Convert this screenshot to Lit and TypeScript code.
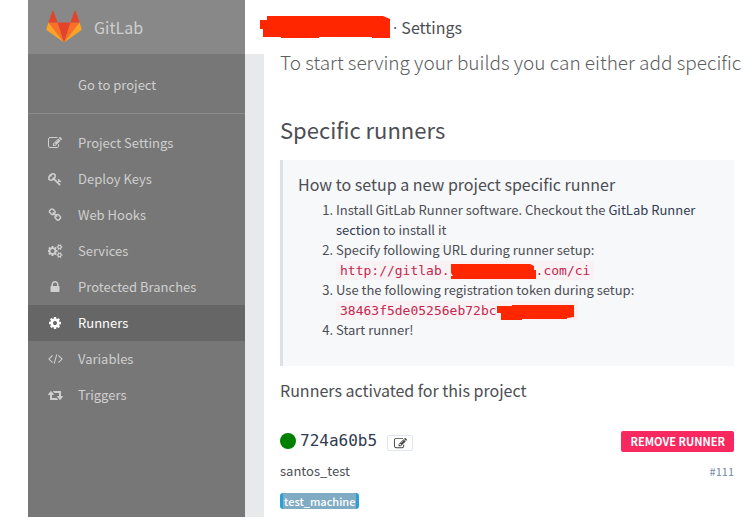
import { LitElement, html, svg, css } from "lit";
import { customElement, property } from "lit/decorators.js";

const gear = "q0 16-149 31-12 27-30 52 51 113 51 138 0 4-4 7-122 71-124 71-8 0-46-47t-52-68q-20 2-30 2t-30-2q-14 21-52 68t-46 47q-2 0-124-71-4-3-4-7 0-25 51-138-18-25-30-52-149-15-149-31v-140q0-16 149-31 13-29 30-52-51-113-51-138 0-4 4-7 4-2 35-20t59-34 30-16q8 0 46 46.5t52 67.5q20-2 30-2t30 2q51-71 92-112l6-2q4 0 124 70 4 3 4 7 0 25-51 138 17 23 30 52 149 15 149 31z";

const icons: Record<string, { box: string; art: unknown }> = {
  edit: {
    box: "0 0 1792 1792",
    art: svg`<path d="M888 1184l116-116-152-152-116 116v56h96v96h56zm440-720q-16-16-33 1l-350 350q-17 17-1 33t33-1l350-350q17-17 1-33zm80 594v190q0 119-84.5 203.5t-203.5 84.5h-832q-119 0-203.5-84.5t-84.5-203.5v-832q0-119 84.5-203.5t203.5-84.5h832q63 0 117 25 15 7 18 23 3 17-9 29l-49 49q-14 14-32 8-23-6-45-6h-832q-66 0-113 47t-47 113v832q0 66 47 113t113 47h832q66 0 113-47t47-113v-126q0-13 9-22l64-64q15-15 35-7t20 29zm-96-738l288 288-672 672h-288v-288zm444 132l-92 92-288-288 92-92q28-28 68-28t68 28l152 152q28 28 28 68t-28 68z"/>`,
  },
  key: {
    box: "0 0 1792 1792",
    art: svg`<path d="M832 512q0-80-56-136t-136-56-136 56-56 136q0 42 19 83-41-19-83-19-80 0-136 56t-56 136 56 136 136 56 136-56 56-136q0-42-19-83 41 19 83 19 80 0 136-56t56-136zm851 704q0 17-49 66t-66 49q-9 0-28.5-16t-36.5-33-38.5-40-24.5-26l-96 96 220 220q28 28 28 68 0 42-39 81t-81 39q-40 0-68-28l-671-671q-176 131-365 131-163 0-265.5-102.5t-102.5-265.5q0-160 95-313t248-248 313-95q163 0 265.5 102.5t102.5 265.5q0 189-131 365l355 355 96-96q-3-3-26-24.5t-40-38.5-33-36.5-16-28.5q0-17 49-66t66-49q13 0 23 10 6 6 46 44.5t82 79.5 86.5 86 73 78 28.5 41z"/>`,
  },
  link: {
    box: "0 0 1792 1792",
    art: svg`<path d="M1520 1216q0-40-28-68l-208-208q-28-28-68-28-42 0-72 32 3 3 19 18.5t21.5 21.5 15 19 13 25.5 3.5 27.5q0 40-28 68t-68 28q-15 0-27.5-3.5t-25.5-13-19-15-21.5-21.5-18.5-19q-33 31-33 73 0 40 28 68l206 207q27 27 68 27 40 0 68-26l147-146q28-28 28-67zm-703-705q0-40-28-68l-206-207q-28-28-68-28-39 0-68 27l-147 146q-28 28-28 67 0 40 28 68l208 208q27 27 68 27 42 0 72-31-3-3-19-18.5t-21.5-21.5-15-19-13-25.5-3.5-27.5q0-40 28-68t68-28q15 0 27.5 3.5t25.5 13 19 15 21.5 21.5 18.5 19q33-31 33-73zm895 705q0 120-85 203l-147 146q-83 83-203 83-121 0-204-85l-206-207q-83-83-83-203 0-123 88-209l-88-88q-86 88-208 88-120 0-204-84l-208-208q-84-84-84-204t85-203l147-146q83-83 203-83 121 0 204 85l206 207q83 83 83 203 0 123-88 209l88 88q86-88 208-88 120 0 204 84l208 208q84 84 84 204z"/>`,
  },
  cogs: {
    box: "0 0 1920 1792",
    art: svg`<path d="M832 896q0-106-75-181t-181-75-181 75-75 181 75 181 181 75 181-75 75-181zm768 512q0-52-38-90t-90-38-90 38-38 90q0 53 37.5 90.5t90.5 37.5 90.5-37.5 37.5-90.5zm0-1024q0-52-38-90t-90-38-90 38-38 90q0 53 37.5 90.5t90.5 37.5 90.5-37.5 37.5-90.5zm-384 421v185q0 10-7 19.5t-16 10.5l-155 24q-11 35-32 76 34 48 90 115 7 11 7 20 0 12-7 19-23 30-82.5 89.5t-78.5 59.5q-11 0-21-7l-115-90q-37 19-77 31-11 108-23 155-7 24-30 24h-186q-11 0-20-7.5t-10-17.5l-23-153q-34-10-75-31l-118 89q-7 7-20 7-11 0-21-8-144-133-144-160 0-9 7-19 10-14 41-53t47-61q-23-44-35-82l-152-24q-10-1-17-9.5t-7-19.5v-185q0-10 7-19.5t16-10.5l155-24q11-35 32-76-34-48-90-115-7-11-7-20 0-12 7-20 22-30 82-89t79-59q11 0 21 7l115 90q34-18 77-32 11-108 23-154 7-24 30-24h186q11 0 20 7.5t10 17.5l23 153q34 10 75 31l118-89q8-7 20-7 11 0 21 8 144 133 144 160 0 8-7 19-12 16-42 54t-45 60q23 48 34 82l152 23q10 2 17 10.5t7 19.5zm640 533v140${gear}m0-1024v140${gear}"/>`,
  },
  lock: {
    box: "0 0 1792 1792",
    art: svg`<path d="M640 768h512v-192q0-106-75-181t-181-75-181 75-75 181v192zm832 96v576q0 40-28 68t-68 28h-960q-40 0-68-28t-28-68v-576q0-40 28-68t68-28h32v-192q0-184 132-316t316-132 316 132 132 316v192h32q40 0 68 28t28 68z"/>`,
  },
  cog: {
    box: "0 0 1792 1792",
    art: svg`<path d="M1152 896q0-106-75-181t-181-75-181 75-75 181 75 181 181 75 181-75 75-181zm512-109v222q0 12-8 23t-20 13l-185 28q-19 54-39 91 35 50 107 138 10 12 10 25t-9 23q-27 37-99 108t-94 71q-12 0-26-9l-138-108q-44 23-91 38-16 136-29 186-7 28-36 28h-222q-14 0-24.5-8.5t-11.5-21.5l-28-184q-49-16-90-37l-141 107q-10 9-25 9-14 0-25-11-126-114-165-168-7-10-7-23 0-12 8-23 15-21 51-66.5t54-70.5q-27-50-41-99l-183-27q-13-2-21-12.5t-8-23.5v-222q0-12 8-23t19-13l186-28q14-46 39-92-40-57-107-138-10-12-10-24 0-10 9-23 26-36 98.5-107.5t94.5-71.5q13 0 26 10l138 107q44-23 91-38 16-136 29-186 7-28 36-28h222q14 0 24.5 8.5t11.5 21.5l28 184q49 16 90 37l142-107q9-9 24-9 13 0 25 10 129 119 165 170 7 8 7 22 0 12-8 23-15 21-51 66.5t-54 70.5q26 50 41 98l183 28q13 2 21 12.5t8 23.5z"/>`,
  },
  code: {
    box: "0 0 1920 1792",
    art: svg`<path d="M580 440L120 900l460 460M1340 440l460 460-460 460M1130 300L790 1500" fill="none" stroke="currentColor" stroke-width="130"/>`,
  },
  retweet: {
    box: "0 0 1920 1792",
    art: svg`<path d="M1280 1504q0 13-9.5 22.5t-22.5 9.5h-960q-8 0-13.5-2t-9-7-5.5-8-3-11.5-1-11.5v-600h-192q-26 0-45-19t-19-45q0-24 15-41l320-384q19-22 49-22t49 22l320 384q15 17 15 41 0 26-19 45t-45 19h-192v384h576q16 0 25 11l160 192q7 10 7 21zm640-416q0 24-15 41l-320 384q-20 23-49 23t-49-23l-320-384q-15-17-15-41 0-26 19-45t45-19h192v-384h-576q-16 0-25-12l-160-192q-7-9-7-20 0-13 9.5-22.5t22.5-9.5h960q8 0 13.5 2t9 7 5.5 8 3 11.5 1 11.5v600h192q26 0 45 19t19 45z"/>`,
  },
};

@customElement("ui-icon")
export class UiIcon extends LitElement {
  @property() name = "edit";

  static styles = css`
    :host {
      display: inline-flex;
      justify-content: center;
      width: 16px;
      height: 14px;
    }
    svg {
      height: 100%;
      fill: currentColor;
    }
  `;

  render() {
    const icon = icons[this.name];
    return html`<svg viewBox=${icon.box} aria-hidden="true">${icon.art}</svg>`;
  }
}

const links = [
  { icon: "edit", label: "Project Settings" },
  { icon: "key", label: "Deploy Keys" },
  { icon: "link", label: "Web Hooks" },
  { icon: "cogs", label: "Services" },
  { icon: "lock", label: "Protected Branches" },
  { icon: "cog", label: "Runners", active: true },
  { icon: "code", label: "Variables" },
  { icon: "retweet", label: "Triggers" },
];

@customElement("side-nav")
export class SideNav extends LitElement {
  static styles = css`
    :host {
      display: block;
      flex: none;
      width: 217px;
      background: #777;
      color: #cfcfcf;
      font-size: 13px;
    }
    a {
      color: inherit;
      text-decoration: none;
    }
    .brand {
      display: flex;
      align-items: center;
      gap: 12px;
      height: 54px;
      padding-left: 18px;
      box-sizing: border-box;
      background: #888;
      font-size: 16px;
    }
    .brand svg {
      width: 36px;
      height: 34px;
    }
    .back {
      display: block;
      padding: 21px 0 18px 50px;
      line-height: 20px;
      border-bottom: 1px solid #8c8c8c;
    }
    ul {
      list-style: none;
      margin: 0;
      padding: 11px 0;
    }
    .item {
      display: flex;
      align-items: center;
      gap: 15px;
      height: 36px;
      padding-left: 19px;
    }
    .active {
      background: #666;
      color: #fff;
    }
  `;

  render() {
    return html`
      <a class="brand" href="#">
        <svg viewBox="0 0 36 34" aria-hidden="true">
          <path fill="#e24329" d="M18 32.500L24.500 12.500H11.500z" />
          <path fill="#fc6d26" d="M18 32.500L11.500 12.500H2.400zM18 32.500L24.500 12.500H33.600z" />
          <path fill="#fca326" d="M2.400 12.500L0.500 18.500Q0.200 19.800 1.200 20.500L18 32.500zM33.600 12.500L35.500 18.500Q35.800 19.800 34.800 20.500L18 32.500z" />
          <path fill="#e24329" d="M2.400 12.500H11.500L7.500 1Q7 0 6.500 1zM33.600 12.500H24.500L28.500 1Q29 0 29.500 1z" />
        </svg>
        <span>GitLab</span>
      </a>
      <a class="back" href="#">Go to project</a>
      <ul>
        ${links.map(
          (l) => html`<li>
            <a class=${l.active ? "item active" : "item"} href="#"><ui-icon name=${l.icon}></ui-icon>${l.label}</a>
          </li>`
        )}
      </ul>
    `;
  }
}

@customElement("app-root")
export class AppRoot extends LitElement {
  static styles = css`
    :host {
      display: flex;
      min-height: 100vh;
      padding: 0 7px 9px 28px;
      box-sizing: border-box;
      background: #fff;
      color: #4c4e54;
      font-family: "Noto Sans CJK SC", "Open Sans", sans-serif;
      font-size: 13px;
      line-height: 20px;
    }
    a {
      color: #313b52;
      text-decoration: none;
    }
    h1, h2, h3, h4, p, ol {
      margin: 0;
      font-weight: 400;
    }
    .page {
      flex: 1;
      min-width: 0;
      display: flex;
      flex-direction: column;
    }
    .top {
      display: flex;
      align-items: center;
      gap: 2px;
      height: 54px;
      padding-left: 14px;
    }
    h1 {
      font-size: 16px;
    }
    .sep {
      font-family: "Open Sans", sans-serif;
    }
    .mark-title {
      width: 132px;
      height: 24px;
    }
    .mark {
      fill: #ff2600;
    }
    .body {
      flex: 1;
      padding: 0 15px 0 16px;
      border-left: 19px solid #e8e9eb;
    }
    .lead {
      white-space: nowrap;
      font-size: 19px;
      font-weight: 300;
      line-height: 16px;
      color: #5c5d5e;
    }
    h2 {
      margin: 44px 0 16px;
      font-size: 22px;
      line-height: 30px;
    }
    .help {
      padding: 12px 15px 26px;
      border-left: 3px solid #dfdfe7;
      background: #f7f8fa;
    }
    h3, h4 {
      font-size: 16px;
      line-height: 24px;
    }
    h3 {
      margin-bottom: 4px;
    }
    ol {
      padding-left: 38px;
    }
    code {
      font-family: "DejaVu Sans Mono", monospace;
      font-size: 13px;
      line-height: 16px;
      padding: 2px 4px;
      border-radius: 2px;
      background: #f9f2f4;
      color: #c7254e;
      white-space: nowrap;
    }
    code svg {
      height: 16px;
      margin: -2px 0;
      vertical-align: middle;
    }
    .mark-host {
      width: 86px;
    }
    .mark-token {
      width: 77px;
    }
    h4 {
      margin: 12px 0 27px;
    }
    .row {
      display: flex;
      align-items: center;
      justify-content: space-between;
    }
    .id {
      display: flex;
      align-items: center;
      gap: 4px;
      height: 24px;
      font-family: "DejaVu Sans Mono", monospace;
      font-size: 16px;
    }
    .dot {
      width: 16px;
      height: 16px;
      border-radius: 50%;
      background: #008000;
    }
    .edit {
      display: flex;
      align-items: center;
      justify-content: center;
      width: 26px;
      height: 16px;
      margin: 4px 0 0 6px;
      padding: 0;
      border: 1px solid #e2e6ee;
      border-radius: 2px;
      background: #fff;
      color: #444;
    }
    .edit ui-icon {
      height: 13px;
    }
    .remove {
      height: 21px;
      padding: 0 9px;
      border: 0;
      border-radius: 2px;
      background: #f9285f;
      color: #fff;
      font: 700 11px/20px "Noto Sans CJK SC", sans-serif;
    }
    .meta {
      margin: 8px 0 10px;
    }
    .num {
      font-size: 11px;
      color: #7488a8;
    }
    .tag {
      display: inline-block;
      border: solid #2d9fd8;
      border-width: 0 3px;
      padding: 0 1px;
      border-radius: 3px;
      background: #7fabc4;
      color: #fff;
      font-size: 11px;
      font-weight: 500;
      line-height: 16px;
    }
  `;

  render() {
    return html`
      <side-nav></side-nav>
      <div class="page">
        <header class="top">
          <svg class="mark mark-title" viewBox="0 0 132 24" aria-hidden="true">
            <path d="M8 1H124L131 4V23H113V22H60V23H22V22H4V14H1V5H8z" />
          </svg>
          <h1><span class="sep">· </span>Settings</h1>
        </header>
        <main class="body">
          <p class="lead">To start serving your builds you can either add specific</p>
          <h2>Specific runners</h2>
          <section class="help">
            <h3>How to setup a new project specific runner</h3>
            <ol>
              <li>Install GitLab Runner software. Checkout the <a href="#">GitLab Runner section</a> to install it</li>
              <li>Specify following URL during runner setup:<br />
                <code>http://gitlab.<svg class="mark mark-host" viewBox="0 0 86 16" aria-hidden="true"><path d="M1 0H80L84 2V6H86V15H1V12H3L1 9z" /></svg>.com/ci</code>
              </li>
              <li>Use the following registration token during setup:<br />
                <code>38463f5de05256eb72bc<svg class="mark mark-token" viewBox="0 0 77 16" aria-hidden="true"><path d="M0 2H15V1H77V13L70 14V15H25V16H4V9H0z" /></svg></code>
              </li>
              <li>Start runner!</li>
            </ol>
          </section>
          <h4>Runners activated for this project</h4>
          <div class="row">
            <div class="id">
              <span class="dot"></span>
              <a href="#">724a60b5</a>
              <button class="edit" aria-label="Edit runner"><ui-icon name="edit"></ui-icon></button>
            </div>
            <button class="remove">REMOVE RUNNER</button>
          </div>
          <div class="row meta">
            <span>santos_test</span>
            <span class="num">#111</span>
          </div>
          <span class="tag">test_machine</span>
        </main>
      </div>
    `;
  }
}
